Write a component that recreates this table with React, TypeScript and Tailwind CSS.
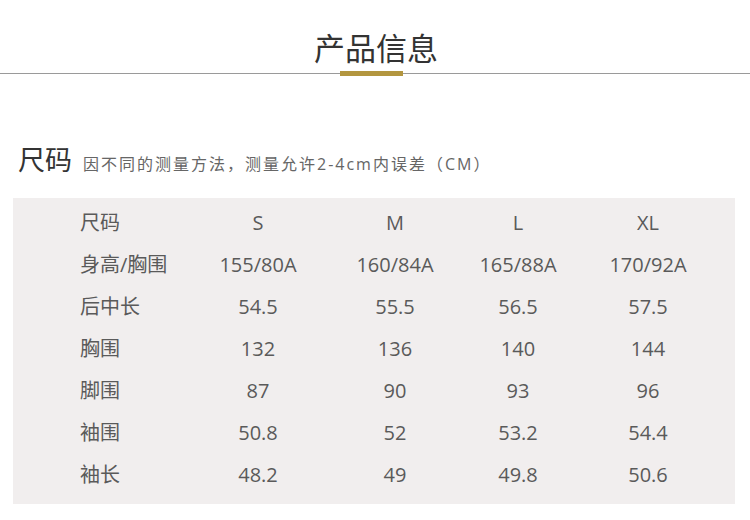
const columns = ['S', 'M', 'L', 'XL'];

const rows: { label: string; values: string[] }[] = [
  { label: '尺码', values: ['S', 'M', 'L', 'XL'] },
  { label: '身高/胸围', values: ['155/80A', '160/84A', '165/88A', '170/92A'] },
  { label: '后中长', values: ['54.5', '55.5', '56.5', '57.5'] },
  { label: '胸围', values: ['132', '136', '140', '144'] },
  { label: '脚围', values: ['87', '90', '93', '96'] },
  { label: '袖围', values: ['50.8', '52', '53.2', '54.4'] },
  { label: '袖长', values: ['48.2', '49', '49.8', '50.6'] },
];

export default function App() {
  return (
    <div
      className="w-[750px] h-[520px] bg-white overflow-hidden"
      style={{ fontFamily: '"Open Sans", "Noto Sans CJK SC", sans-serif' }}
    >
      {/* Section title */}
      <div className="pt-[30px] flex justify-center">
        <h1 className="text-[31px] leading-[36px] text-[#333] font-normal pl-[2px]">产品信息</h1>
      </div>
      <div className="mt-[5px] flex items-center h-[5px]">
        <div className="w-[340px] h-px bg-[#9a9a9a]" />
        <div className="w-[63px] h-[5px] bg-[#b3963f]" />
        <div className="flex-1 h-px bg-[#9a9a9a]" />
      </div>

      {/* Size heading */}
      <div className="mt-[66px] pl-[18px] flex items-baseline h-[36px]">
        <span className="text-[27px] leading-[36px] text-[#333]">尺码</span>
        <span className="ml-[11px] text-[16px] tracking-[2px] text-[#666]">
          因不同的测量方法，测量允许2-4cm内误差（CM）
        </span>
      </div>

      {/* Size table */}
      <div className="mt-[20px] ml-[13px] w-[722px] bg-[#f1eeee] pt-[4px] pb-[8px]">
        {rows.map((row) => (
          <div
            key={row.label}
            className="grid grid-cols-[185px_120px_154px_92px_168px] h-[42px] items-center text-[20px] text-[#5a5a5a]"
          >
            <div className="pl-[67px] whitespace-nowrap">{row.label}</div>
            {row.values.map((v, i) => (
              <div key={columns[i]} className="flex justify-center whitespace-nowrap">
                {v}
              </div>
            ))}
          </div>
        ))}
      </div>
    </div>
  );
}
